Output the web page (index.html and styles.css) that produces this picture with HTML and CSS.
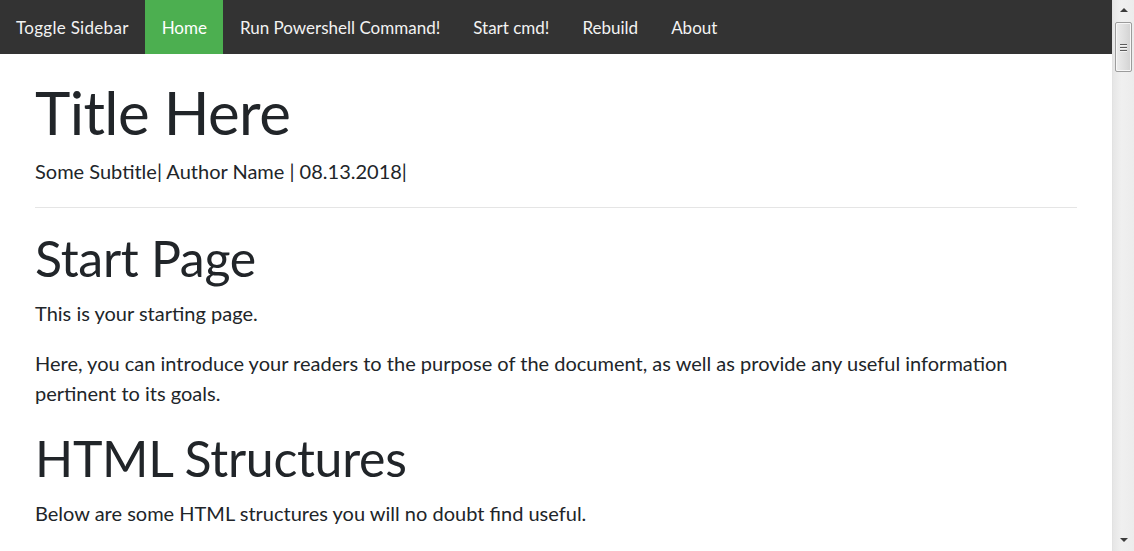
FILE: index.html
```html
<!DOCTYPE html>
<html lang="en">
<head>
    <meta charset="UTF-8">
    <title>Start Page</title>
    <link rel="stylesheet" href="styles.css">
</head>
<body>
    <div class="page">
        <nav class="topnav">
            <a href="#" class="nav-item toggle">Toggle Sidebar</a>
            <a href="#" class="nav-item active">Home</a>
            <a href="#" class="nav-item">Run Powershell Command!</a>
            <a href="#" class="nav-item">Start cmd!</a>
            <a href="#" class="nav-item">Rebuild</a>
            <a href="#" class="nav-item">About</a>
        </nav>

        <div class="content">
            <h1 class="title">Title Here</h1>
            <p class="subtitle">Some Subtitle| Author Name | 08.13.2018|</p>
            <hr>

            <h1>Start Page</h1>
            <p>This is your starting page.</p>
            <p>Here, you can introduce your readers to the purpose of the document, as well as provide any useful information pertinent to its goals.</p>

            <h1>HTML Structures</h1>
            <p>Below are some HTML structures you will no doubt find useful.</p>
        </div>
    </div>

    <div class="scrollbar">
        <div class="arrow up"></div>
        <div class="thumb">
            <div class="grip"></div>
            <div class="grip"></div>
            <div class="grip"></div>
        </div>
        <div class="track"></div>
        <div class="arrow down"></div>
    </div>
</body>
</html>
```

FILE: styles.css
```css
html, body {
    height: 100%;
}

body {
    margin: 0;
    display: flex;
    overflow: hidden;
    font-family: Lato, "Open Sans", sans-serif;
    color: #212529;
    background: #fff;
}

.page {
    flex: 1;
    min-width: 0;
    overflow: hidden;
}

/* top bar */
.topnav {
    display: flex;
    height: 54px;
    background: #333;
}

.nav-item {
    display: flex;
    align-items: center;
    padding: 0 16.5px;
    color: #f2f2f2;
    text-decoration: none;
    font-size: 17px;
}

.nav-item.toggle {
    padding-left: 16px;
    letter-spacing: 0.3px;
}

.nav-item.active {
    background: #4caf50;
    color: #fff;
}

/* page text */
.content {
    padding: 0 35px;
}

h1 {
    font-size: 50px;
    font-weight: 400;
    line-height: 1.2;
    letter-spacing: -0.3px;
    margin: 0 0 10px;
}

h1.title {
    font-size: 60px;
    letter-spacing: -0.6px;
    line-height: 72px;
    margin: 22px 0 8px;
}

p {
    font-size: 20px;
    line-height: 1.5;
    margin: 0 0 20px;
}

.subtitle {
    margin-bottom: 0;
}

hr {
    border: 0;
    border-top: 1px solid #e5e5e5;
    margin: 21px 0 20px;
}

/* fake windows scrollbar */
.scrollbar {
    width: 21px;
    display: flex;
    flex-direction: column;
    align-items: center;
    background: linear-gradient(to right, #e6e6e6, #f0f0f0 40%, #ececec);
    border-left: 1px solid #e2e2e2;
}

.arrow {
    width: 0;
    height: 0;
    border-left: 4px solid transparent;
    border-right: 4px solid transparent;
}

.arrow.up {
    border-bottom: 4px solid #3c3c3c;
    margin: 8px 0 10px;
}

.arrow.down {
    border-top: 4px solid #3c3c3c;
    margin-bottom: 9px;
}

.thumb {
    width: 17px;
    height: 50px;
    box-sizing: border-box;
    border: 1px solid #9c9c9c;
    border-radius: 2px;
    background: linear-gradient(to right, #ececec, #e0e0e0 50%, #d2d2d2);
    box-shadow: inset 0 0 0 1px #f7f7f7;
    display: flex;
    flex-direction: column;
    align-items: center;
    justify-content: center;
    gap: 2px;
}

.grip {
    width: 7px;
    height: 1px;
    background: #5c5c5c;
    box-shadow: 0 1px 0 #f4f4f4;
}

.track {
    flex: 1;
}
```
